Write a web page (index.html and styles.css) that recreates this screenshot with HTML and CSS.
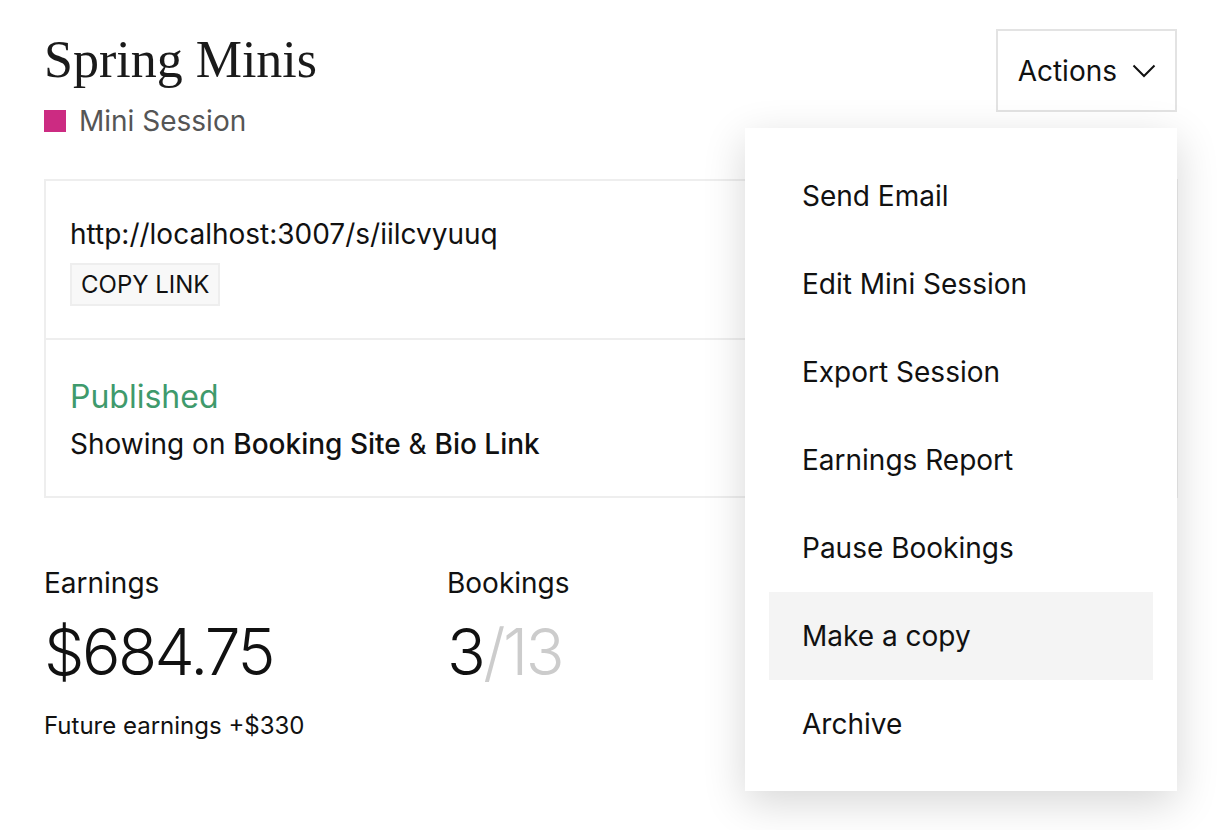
FILE: index.html
```html
<!DOCTYPE html>
<html lang="en">
<head>
    <meta charset="UTF-8">
    <meta name="viewport" content="width=device-width, initial-scale=1.0">
    <title>Spring Minis</title>
    <link rel="stylesheet" href="styles.css">
</head>
<body>
    <div class="page">
        <div class="header">
            <div class="title-block">
                <h1>Spring Minis</h1>
                <div class="session-type">
                    <span class="swatch"></span>
                    <span>Mini Session</span>
                </div>
            </div>

            <div class="actions">
                <button type="button" class="actions-button">
                    Actions
                    <svg width="24" height="14" viewBox="0 0 24 14" fill="none" stroke="#111" stroke-width="2">
                        <path d="M1.5 1.5 L12 12 L22.5 1.5"/>
                    </svg>
                </button>

                <ul class="menu">
                    <li>Send Email</li>
                    <li>Edit Mini Session</li>
                    <li>Export Session</li>
                    <li>Earnings Report</li>
                    <li>Pause Bookings</li>
                    <li class="active">Make a copy</li>
                    <li>Archive</li>
                </ul>
            </div>
        </div>

        <div class="card">
            <div class="card-section">
                <div class="link">http://localhost:3007/s/iilcvyuuq</div>
                <button type="button" class="copy-button">Copy link</button>
            </div>
            <div class="card-section">
                <div class="status">Published</div>
                <div class="showing">Showing on <b>Booking Site</b> &amp; <b>Bio Link</b></div>
            </div>
        </div>

        <div class="stats">
            <div class="stat">
                <div class="stat-label">Earnings</div>
                <div class="stat-value">$684.75</div>
                <div class="stat-note">Future earnings +$330</div>
            </div>
            <div class="stat">
                <div class="stat-label">Bookings</div>
                <div class="stat-value">3<span class="muted">/13</span></div>
            </div>
        </div>
    </div>
</body>
</html>
```

FILE: styles.css
```css
body {
    font-family: Inter, "Noto Sans", sans-serif;
    background-color: #fff;
    color: #111;
    margin: 0;
    padding: 0;
    min-height: 830px;
}

.page {
    padding: 28px 44px;
    min-height: 830px;
    box-sizing: border-box;
}

.header {
    display: flex;
    justify-content: space-between;
    align-items: flex-start;
}

h1 {
    font-family: "Liberation Serif", "DejaVu Serif", serif;
    font-weight: normal;
    font-size: 52px;
    line-height: 64px;
    margin: 0;
    color: #1a1a1a;
}

.session-type {
    display: flex;
    align-items: center;
    gap: 13px;
    font-size: 28px;
    line-height: 36px;
    color: #555;
    margin-top: 11px;
}

.swatch {
    width: 22px;
    height: 22px;
    background-color: #cc2b82;
}

.actions {
    position: relative;
    margin-right: 1px;
}

.actions-button {
    display: flex;
    align-items: center;
    gap: 15px;
    height: 83px;
    padding: 0 19px 0 20px;
    font-family: inherit;
    font-size: 28px;
    color: #111;
    background-color: #fff;
    border: 2px solid #e3e3e3;
    margin-top: 1px;
}

.menu {
    position: absolute;
    top: 100px;
    right: 0;
    width: 432px;
    list-style: none;
    margin: 0;
    padding: 24px 24px 23px;
    box-sizing: border-box;
    background-color: #fff;
    box-shadow: 0 12px 40px rgba(0, 0, 0, 0.16);
    z-index: 10;
}

.menu li {
    height: 88px;
    display: flex;
    align-items: center;
    padding: 0 33px;
    font-size: 28px;
    color: #111;
}

.menu li.active {
    background-color: #f4f4f4;
}

.card {
    margin-top: 40px;
    border: 2px solid #eee;
}

.card-section {
    padding: 35px 24px 32px;
}

.card-section + .card-section {
    border-top: 2px solid #eee;
    padding-top: 36px;
    padding-bottom: 34px;
}

.link {
    font-size: 28px;
    line-height: 36px;
}

.copy-button {
    margin-top: 11px;
    height: 43px;
    padding: 0 9px;
    font-family: inherit;
    font-size: 24px;
    text-transform: uppercase;
    color: #111;
    background-color: #f8f8f8;
    border: 2px solid #eee;
}

.status {
    font-size: 32px;
    line-height: 42px;
    color: #3f9a6c;
}

.showing {
    font-size: 28px;
    line-height: 36px;
    margin-top: 8px;
}

.showing b {
    font-weight: 500;
}

.stats {
    display: grid;
    grid-template-columns: 403px 403px;
    margin-top: 67px;
}

.stat-label {
    font-size: 28px;
    line-height: 36px;
}

.stat-value {
    font-size: 64px;
    font-weight: 300;
    letter-spacing: -2.5px;
    line-height: 72px;
    margin-top: 15px;
}

.muted {
    color: #ccc;
}

.stat-note {
    font-size: 24px;
    line-height: 30px;
    margin-top: 23px;
}
```
